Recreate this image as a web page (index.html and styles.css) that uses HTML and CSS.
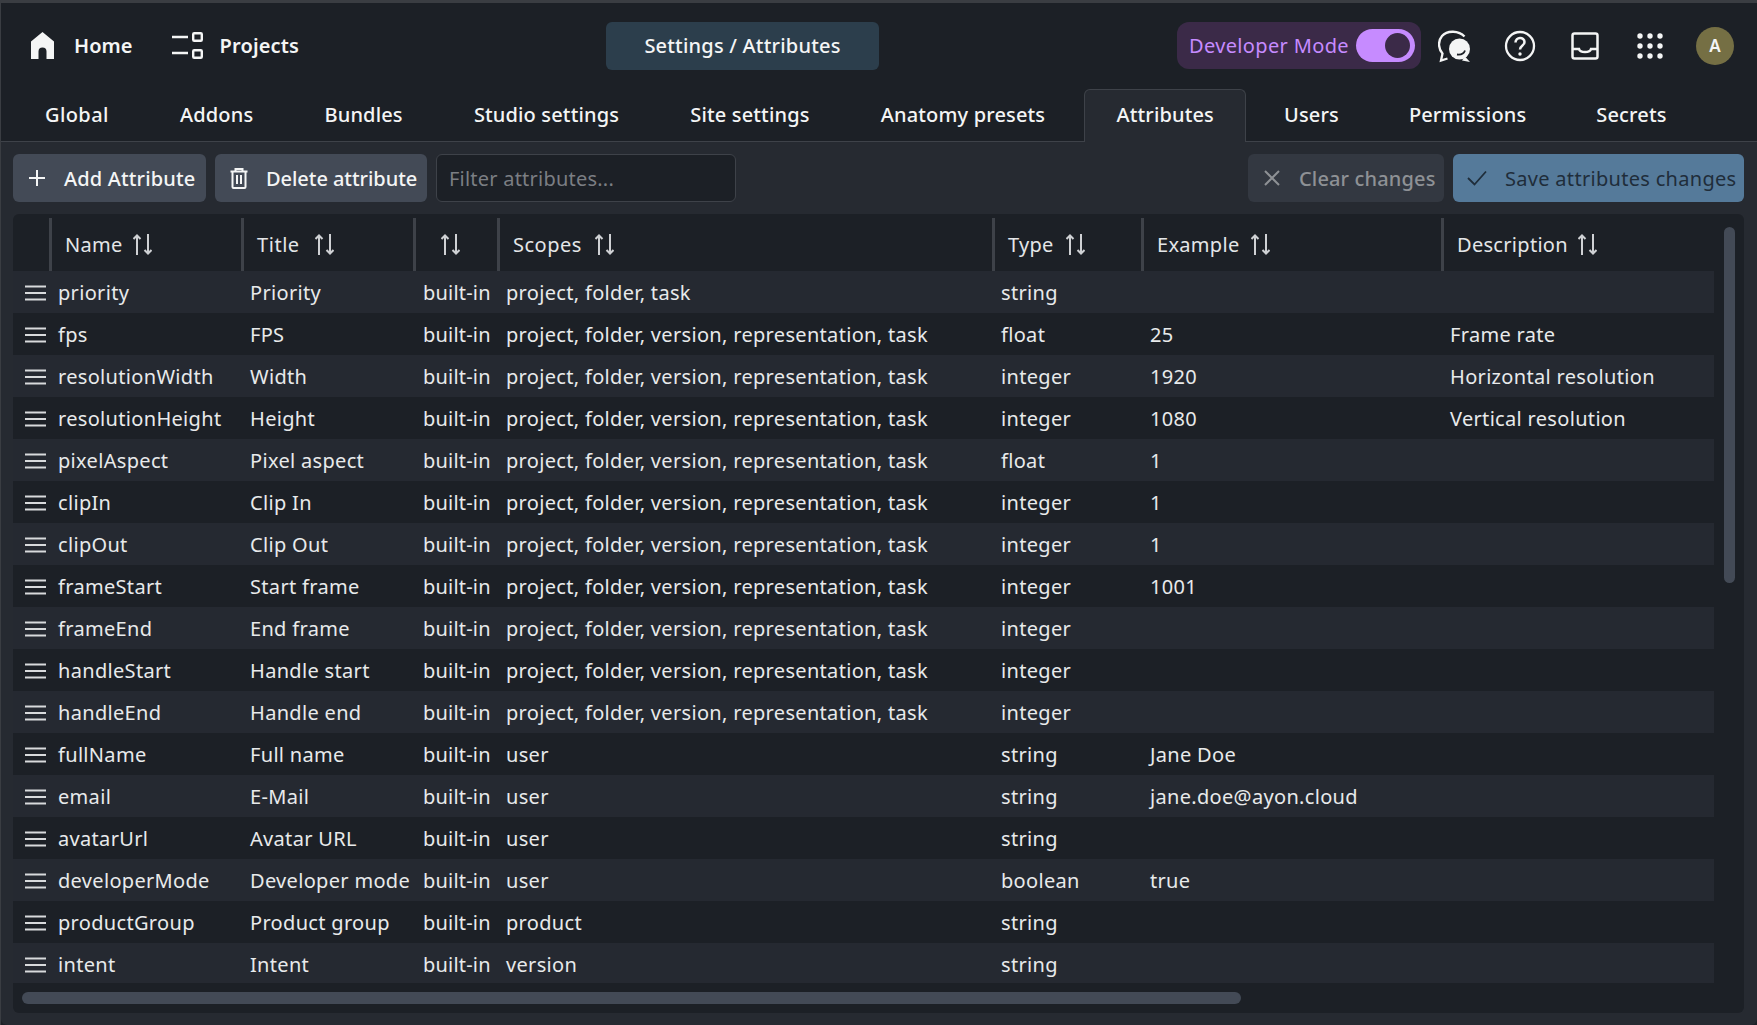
FILE: index.html
```html
<!DOCTYPE html>
<html lang="en">
<head>
<meta charset="utf-8">
<title>Settings / Attributes</title>
<link rel="stylesheet" href="styles.css">
</head>
<body>
<svg class="defs" width="0" height="0"><defs>
  <g id="s" fill="none" stroke="#cfd1d4" stroke-width="2"><path d="M4 21V1.500M0.500 5L4 1.500 7.500 5"/><path d="M15 0V19.500M11.500 16L15 19.500 18.500 16"/></g>
  <g id="g"><path d="M0 1.500H21M0 8H21M0 14.500H21" stroke="#d8dadc" stroke-width="2"/></g>
</defs></svg>
<div class="frame">
<header class="topbar">
  <div class="nav-left">
    <a class="nav-link home">
      <svg class="ico-home" viewBox="0 0 23 27"><path fill="#f4f5f5" d="M11.500 0L23 9.500V27H15.500V19.500a4 4 0 0 0-8 0V27H0V9.500Z"/></svg>
      <span>Home</span>
    </a>
    <a class="nav-link projects">
      <svg class="ico-proj" viewBox="0 0 31 27"><g fill="none" stroke="#f4f5f5" stroke-width="2.400"><path d="M0 5H16M0 21H16"/><rect x="21.200" y="1.200" width="8.600" height="7.600" rx="1"/><rect x="21.200" y="18.200" width="8.600" height="7.600" rx="1"/></g></svg>
      <span>Projects</span>
    </a>
  </div>
  <div class="crumb"><span>Settings / Attributes</span></div>
  <div class="nav-right">
    <div class="devmode"><span>Developer Mode</span><div class="switch"><div class="knob"></div></div></div>
    <svg class="ico-chat" viewBox="0 0 34 34"><path d="M26.500 7.500C21 1.500 9 1 4 7-.5 12.500.5 20 4.500 24.500L3 31.500 9.500 29.500" fill="none" stroke="#f4f5f5" stroke-width="2.300"/><circle cx="21.500" cy="20" r="10.500" fill="#f4f5f5"/><path d="M27 27.500L32 33 24 31.500Z" fill="#f4f5f5"/><path d="M19 25.500c4 .5 7-1 8-4" fill="none" stroke="#1c2026" stroke-width="1.800"/></svg>
    <svg class="ico-top" viewBox="0 0 32 32"><circle cx="16" cy="16" r="14" fill="none" stroke="#f4f5f5" stroke-width="2.300"/><path d="M11.500 12.500c0-6 9-6 9-.5 0 4-4.500 3.500-4.500 7.500" fill="none" stroke="#f4f5f5" stroke-width="2.500"/><circle cx="16" cy="24" r="1.700" fill="#f4f5f5"/></svg>
    <svg class="ico-top" viewBox="0 0 32 32"><rect x="3.500" y="3.500" width="25" height="25" rx="2" fill="none" stroke="#f4f5f5" stroke-width="2.500"/><path d="M4 19h6c1 4 11 4 12 0h6" fill="none" stroke="#f4f5f5" stroke-width="2.500"/></svg>
    <svg class="ico-top" viewBox="0 0 32 32"><g fill="#f4f5f5"><circle cx="6" cy="6" r="2.700"/><circle cx="16" cy="6" r="2.700"/><circle cx="26" cy="6" r="2.700"/><circle cx="6" cy="16" r="2.700"/><circle cx="16" cy="16" r="2.700"/><circle cx="26" cy="16" r="2.700"/><circle cx="6" cy="26" r="2.700"/><circle cx="16" cy="26" r="2.700"/><circle cx="26" cy="26" r="2.700"/></g></svg>
    <div class="avatar">A</div>
  </div>
</header>

<nav class="tabs">
  <a class="tab">Global</a><a class="tab">Addons</a><a class="tab">Bundles</a><a class="tab">Studio settings</a><a class="tab">Site settings</a><a class="tab">Anatomy presets</a><a class="tab active">Attributes</a><a class="tab">Users</a><a class="tab">Permissions</a><a class="tab">Secrets</a>
</nav>

<main class="page">
  <div class="toolbar">
    <button class="btn b-add"><svg class="bi" viewBox="0 0 22 22"><path d="M11 3v16M3 11h16" stroke="#f4f5f5" stroke-width="2" fill="none"/></svg><span>Add Attribute</span></button>
    <button class="btn b-del"><svg class="bi" viewBox="0 0 22 22"><path d="M2.500 4.500h17M7.500 4V2h7v2M4.500 5v15a1 1 0 0 0 1 1h11a1 1 0 0 0 1-1V5M9 8v9M13 8v9" fill="none" stroke="#f4f5f5" stroke-width="2"/></svg><span>Delete attribute</span></button>
    <input class="filter" placeholder="Filter attributes...">
    <div class="spacer"></div>
    <button class="btn muted"><svg class="bi" viewBox="0 0 22 22"><path d="M4 4l14 14M18 4L4 18" stroke="#8e9195" stroke-width="2" fill="none"/></svg><span>Clear changes</span></button>
    <button class="btn save"><svg class="bi" viewBox="0 0 22 22"><path d="M2 11l6.500 6.500L20 4.500" stroke="#1f2d3a" stroke-width="1.800" fill="none"/></svg><span>Save attributes changes</span></button>
  </div>

  <section class="card">
    <div class="table">
      <div class="row head">
        <div class="h c0"></div>
        <div class="h c1"><span>Name</span><svg class="sort" viewBox="0 0 19 21"><use href="#s"/></svg></div>
        <div class="h c2"><span>Title</span><svg class="sort" viewBox="0 0 19 21"><use href="#s"/></svg></div>
        <div class="h c3"><svg class="sort" viewBox="0 0 19 21"><use href="#s"/></svg></div>
        <div class="h c4"><span>Scopes</span><svg class="sort" viewBox="0 0 19 21"><use href="#s"/></svg></div>
        <div class="h c5"><span>Type</span><svg class="sort" viewBox="0 0 19 21"><use href="#s"/></svg></div>
        <div class="h c6"><span>Example</span><svg class="sort" viewBox="0 0 19 21"><use href="#s"/></svg></div>
        <div class="h c7"><span>Description</span><svg class="sort" viewBox="0 0 19 21"><use href="#s"/></svg></div>
      </div>
      <div class="rows">
        <div class="row body"><div class="d c0"><svg class="grip" viewBox="0 0 21 16"><use href="#g"/></svg></div><div class="d">priority</div><div class="d">Priority</div><div class="d c3">built-in</div><div class="d">project, folder, task</div><div class="d">string</div><div class="d"></div><div class="d"></div></div>
        <div class="row body"><div class="d c0"><svg class="grip" viewBox="0 0 21 16"><use href="#g"/></svg></div><div class="d">fps</div><div class="d">FPS</div><div class="d c3">built-in</div><div class="d">project, folder, version, representation, task</div><div class="d">float</div><div class="d">25</div><div class="d">Frame rate</div></div>
        <div class="row body"><div class="d c0"><svg class="grip" viewBox="0 0 21 16"><use href="#g"/></svg></div><div class="d">resolutionWidth</div><div class="d">Width</div><div class="d c3">built-in</div><div class="d">project, folder, version, representation, task</div><div class="d">integer</div><div class="d">1920</div><div class="d">Horizontal resolution</div></div>
        <div class="row body"><div class="d c0"><svg class="grip" viewBox="0 0 21 16"><use href="#g"/></svg></div><div class="d">resolutionHeight</div><div class="d">Height</div><div class="d c3">built-in</div><div class="d">project, folder, version, representation, task</div><div class="d">integer</div><div class="d">1080</div><div class="d">Vertical resolution</div></div>
        <div class="row body"><div class="d c0"><svg class="grip" viewBox="0 0 21 16"><use href="#g"/></svg></div><div class="d">pixelAspect</div><div class="d">Pixel aspect</div><div class="d c3">built-in</div><div class="d">project, folder, version, representation, task</div><div class="d">float</div><div class="d">1</div><div class="d"></div></div>
        <div class="row body"><div class="d c0"><svg class="grip" viewBox="0 0 21 16"><use href="#g"/></svg></div><div class="d">clipIn</div><div class="d">Clip In</div><div class="d c3">built-in</div><div class="d">project, folder, version, representation, task</div><div class="d">integer</div><div class="d">1</div><div class="d"></div></div>
        <div class="row body"><div class="d c0"><svg class="grip" viewBox="0 0 21 16"><use href="#g"/></svg></div><div class="d">clipOut</div><div class="d">Clip Out</div><div class="d c3">built-in</div><div class="d">project, folder, version, representation, task</div><div class="d">integer</div><div class="d">1</div><div class="d"></div></div>
        <div class="row body"><div class="d c0"><svg class="grip" viewBox="0 0 21 16"><use href="#g"/></svg></div><div class="d">frameStart</div><div class="d">Start frame</div><div class="d c3">built-in</div><div class="d">project, folder, version, representation, task</div><div class="d">integer</div><div class="d">1001</div><div class="d"></div></div>
        <div class="row body"><div class="d c0"><svg class="grip" viewBox="0 0 21 16"><use href="#g"/></svg></div><div class="d">frameEnd</div><div class="d">End frame</div><div class="d c3">built-in</div><div class="d">project, folder, version, representation, task</div><div class="d">integer</div><div class="d"></div><div class="d"></div></div>
        <div class="row body"><div class="d c0"><svg class="grip" viewBox="0 0 21 16"><use href="#g"/></svg></div><div class="d">handleStart</div><div class="d">Handle start</div><div class="d c3">built-in</div><div class="d">project, folder, version, representation, task</div><div class="d">integer</div><div class="d"></div><div class="d"></div></div>
        <div class="row body"><div class="d c0"><svg class="grip" viewBox="0 0 21 16"><use href="#g"/></svg></div><div class="d">handleEnd</div><div class="d">Handle end</div><div class="d c3">built-in</div><div class="d">project, folder, version, representation, task</div><div class="d">integer</div><div class="d"></div><div class="d"></div></div>
        <div class="row body"><div class="d c0"><svg class="grip" viewBox="0 0 21 16"><use href="#g"/></svg></div><div class="d">fullName</div><div class="d">Full name</div><div class="d c3">built-in</div><div class="d">user</div><div class="d">string</div><div class="d">Jane Doe</div><div class="d"></div></div>
        <div class="row body"><div class="d c0"><svg class="grip" viewBox="0 0 21 16"><use href="#g"/></svg></div><div class="d">email</div><div class="d">E-Mail</div><div class="d c3">built-in</div><div class="d">user</div><div class="d">string</div><div class="d">jane.doe@ayon.cloud</div><div class="d"></div></div>
        <div class="row body"><div class="d c0"><svg class="grip" viewBox="0 0 21 16"><use href="#g"/></svg></div><div class="d">avatarUrl</div><div class="d">Avatar URL</div><div class="d c3">built-in</div><div class="d">user</div><div class="d">string</div><div class="d"></div><div class="d"></div></div>
        <div class="row body"><div class="d c0"><svg class="grip" viewBox="0 0 21 16"><use href="#g"/></svg></div><div class="d">developerMode</div><div class="d">Developer mode</div><div class="d c3">built-in</div><div class="d">user</div><div class="d">boolean</div><div class="d">true</div><div class="d"></div></div>
        <div class="row body"><div class="d c0"><svg class="grip" viewBox="0 0 21 16"><use href="#g"/></svg></div><div class="d">productGroup</div><div class="d">Product group</div><div class="d c3">built-in</div><div class="d">product</div><div class="d">string</div><div class="d"></div><div class="d"></div></div>
        <div class="row body"><div class="d c0"><svg class="grip" viewBox="0 0 21 16"><use href="#g"/></svg></div><div class="d">intent</div><div class="d">Intent</div><div class="d c3">built-in</div><div class="d">version</div><div class="d">string</div><div class="d"></div><div class="d"></div></div>
      </div>
    </div>
    <div class="vbar"></div>
    <div class="hbar"></div>
  </section>
</main>
</div>
</body>
</html>
```
FILE: styles.css
```css
* { box-sizing: border-box; }
html, body { margin: 0; height: 100%; overflow: hidden; background: #1c2026; }
body { font-family: "Noto Sans", "Open Sans", sans-serif; font-size: 20px; color: #f4f5f5; }
.defs { position: absolute; }
.frame { height: 1025px; display: flex; flex-direction: column; border-top: 3px solid #3a3d42; border-left: 1px solid #3a3d42; }

.topbar { height: 86px; display: flex; align-items: center; position: relative; padding: 0 23px 1px 30px; }
.nav-left { display: flex; align-items: center; gap: 39px; }
.nav-link { display: flex; align-items: center; font-weight: 600; font-size: 20px; letter-spacing: .05px; }
.nav-link span { padding-bottom: 1px; }
.home { gap: 20px; }
.projects { gap: 17px; letter-spacing: .15px; }
.ico-home { width: 23px; height: 27px; }
.ico-proj { width: 31px; height: 27px; }
.crumb { position: absolute; left: 605px; top: 19px; width: 273px; height: 48px; border-radius: 6px; background: #2c3e4c; display: flex; align-items: center; justify-content: center; font-weight: 500; letter-spacing: .2px; padding-bottom: 1px; }

.nav-right { margin-left: auto; display: flex; align-items: center; gap: 33px; }
.devmode { display: flex; align-items: center; justify-content: space-between; height: 47px; width: 244px; padding: 0 6px 0 12px; margin-right: -15px; border-radius: 12px; background: #3b2a48; color: #c68bff; white-space: nowrap; letter-spacing: .35px; }
.switch { width: 59px; height: 33px; border-radius: 17px; background: #c68bff; position: relative; flex: none; }
.knob { position: absolute; right: 5px; top: 4px; width: 25px; height: 25px; border-radius: 50%; background: #3b2a48; }
.ico-top { width: 32px; height: 32px; flex: none; }
.ico-chat { width: 34px; height: 34px; flex: none; margin: 0 -1px; }
.avatar { width: 38px; height: 38px; border-radius: 50%; background: #756f44; display: flex; align-items: center; justify-content: center; font-size: 17px; font-weight: 600; margin-left: -3px; }

.tabs { height: 53px; display: flex; gap: 9.2px; padding-left: 13px; border-bottom: 1px solid #3e4249; }
.tab { padding: 0 30px 4px; display: flex; align-items: center; white-space: nowrap; font-weight: 500; letter-spacing: .15px; border: 1px solid transparent; border-bottom: 0; border-radius: 6px 6px 0 0; height: 53px; }
.tab:first-child { letter-spacing: .4px; }
.tab.active { background: #262a31; border-color: #3e4249; padding: 0 31px 4px; margin: 0 -1px; }
.tab.active ~ .tab { margin-left: -1.2px; }

.page { flex: 1; background: #262a31; padding: 12px 13px 12px 12px; display: flex; flex-direction: column; gap: 12px; min-height: 0; border-radius: 0 0 6px 6px; }
.toolbar { display: flex; gap: 9px; height: 48px; flex: none; }
.spacer { flex: 1; }
.btn { font: inherit; color: #f4f5f5; font-weight: 500; letter-spacing: .15px; border: 0; background: #434a56; border-radius: 6px; padding: 0 0 0 13px; display: flex; align-items: center; gap: 16px; white-space: nowrap; }
.bi { width: 22px; height: 22px; flex: none; }
.b-add { width: 193px; }
.b-del { width: 212px; letter-spacing: -.05px; }
.btn.muted { width: 196px; background: #333841; color: #8e9195; }
.btn.save { width: 291px; background: #557a9a; color: #1f2d3a; font-weight: 400; letter-spacing: .3px; gap: 17px; }
.filter { width: 300px; height: 48px; font: inherit; letter-spacing: .22px; color: #f4f5f5; background: #1c2026; border: 1px solid #3e4249; border-radius: 6px; padding: 0 12px; }
.filter::placeholder { color: #7b7e83; opacity: 1; }

.card { flex: 1; position: relative; background: #1c2026; border-radius: 6px; padding-top: 4px; overflow: hidden; }
.table { width: 1701px; }
.row { display: grid; grid-template-columns: 36px 192px 172px 84px 495px 149px 300px 273px; align-items: center; }
.row.head { height: 53px; }
.row.body { height: 42px; }
.row.body:nth-child(odd) { background: #252931; }
.row.body:last-child { height: 40px; padding-top: 2px; }
.h { height: 53px; display: flex; align-items: center; gap: 12px; padding-left: 13px; border-left: 3px solid #3e4249; color: #e4e6e8; letter-spacing: .3px; }
.h.c0 { border-left: 0; }
.h.c1 { gap: 10px; }
.h.c2 { gap: 15px; letter-spacing: .55px; }
.h.c3 { padding-left: 25px; }
.h.c4 { gap: 13px; letter-spacing: .5px; }
.h.c5 { gap: 12px; }
.h.c6 { gap: 12px; }
.h.c7 { gap: 10px; }
.sort { width: 19px; height: 21px; flex: none; }
.d { padding-left: 9px; white-space: nowrap; color: #e8eaeb; letter-spacing: .32px; }
.d.c3 { padding-left: 10px; letter-spacing: .2px; }
.d.c0 { padding: 2px 0 0 12px; display: flex; align-items: center; }
.grip { width: 21px; height: 16px; }
.vbar { position: absolute; right: 9px; top: 13px; width: 11px; height: 356px; border-radius: 6px; background: #434a56; }
.hbar { position: absolute; left: 9px; bottom: 9px; width: 1219px; height: 12px; border-radius: 6px; background: #434a56; }
```
